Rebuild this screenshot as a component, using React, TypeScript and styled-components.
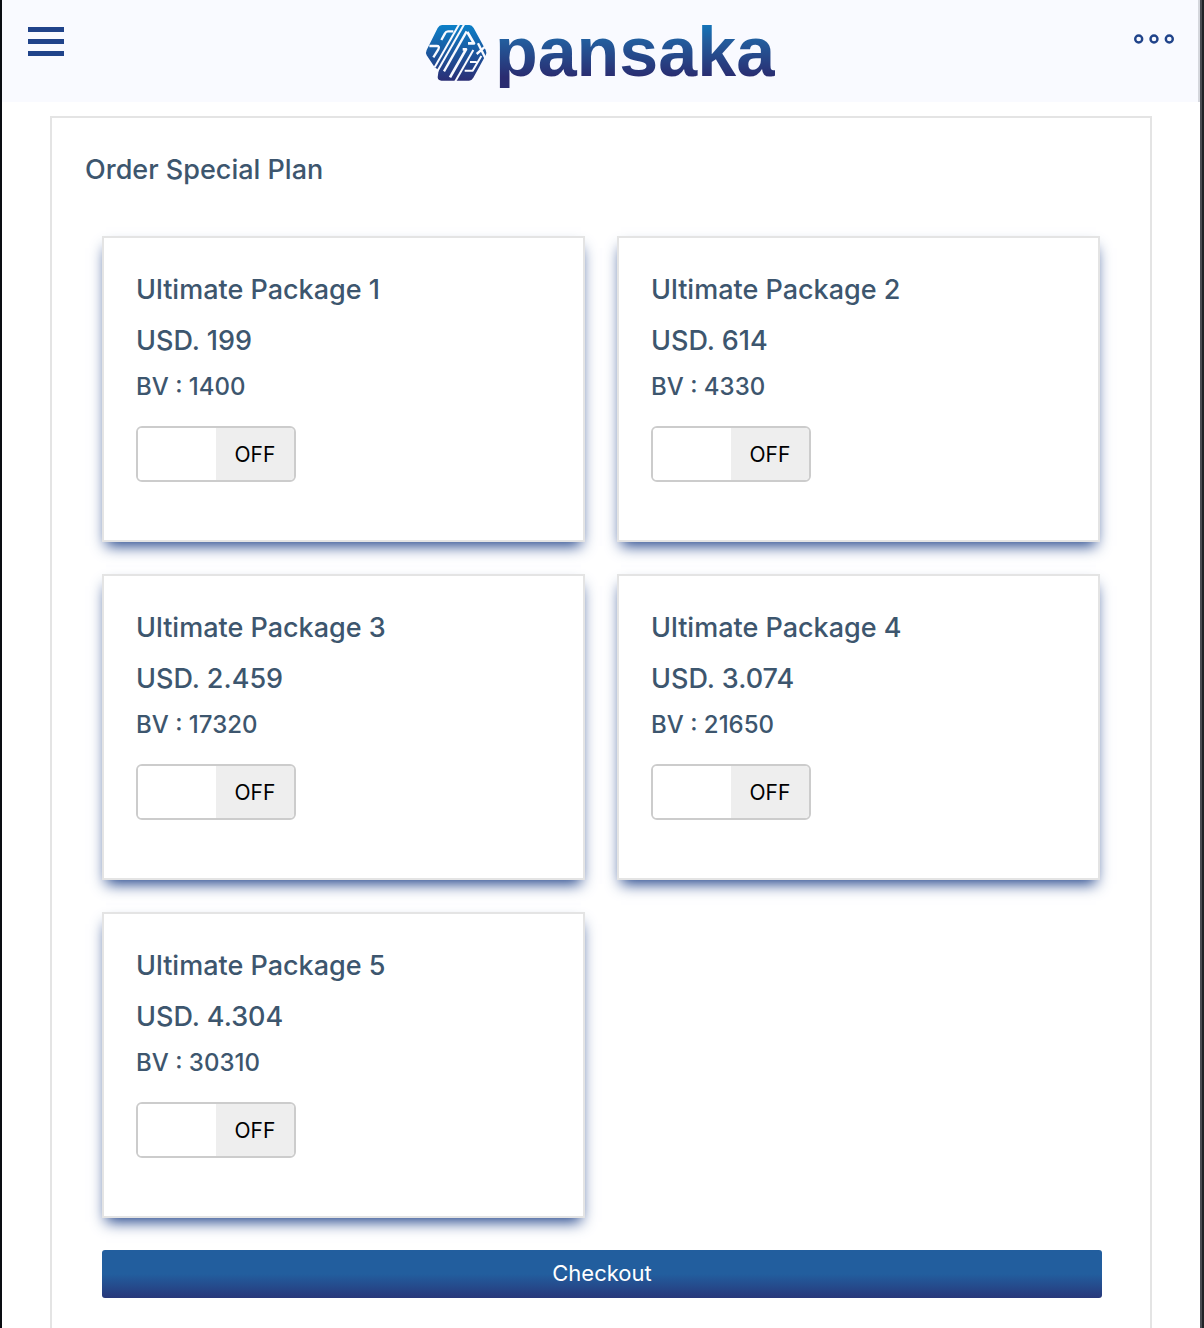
import React, { useState } from 'react';
import styled, { createGlobalStyle } from 'styled-components';

const ink = '#3d566e';
const navy = '#20438a';
const line = '#e4e4e4';

const GlobalStyle = createGlobalStyle`
  *, *::before, *::after { box-sizing: border-box; }
  body {
    margin: 0;
    background: #fff;
    color: ${ink};
    font-family: Inter, 'Open Sans', sans-serif;
  }
  h1, h2, p { margin: 0; font-weight: 500; }
`;

const Frame = styled.div`
  min-height: 100vh;
  display: flex;
  flex-direction: column;
  border-left: 2px solid #0a0d12;
  border-right: 2px solid #202327;
`;

const Screen = styled.div`
  flex: 1;
  display: flex;
  flex-direction: column;
  border-right: 2px solid #4a4d53;
`;

const Header = styled.header`
  display: grid;
  grid-template-columns: 1fr auto 1fr;
  align-items: start;
  height: 102px;
  padding: 16px 24px;
  background: #f9faff;
  border-right: 2px solid #d5d7dd;
`;

const IconButton = styled.button<{ $end?: boolean }>`
  display: flex;
  justify-self: ${p => (p.$end ? 'end' : 'start')};
  padding: ${p => (p.$end ? '18px 0' : '11px 2px')};
  border: 0;
  background: none;
  color: ${navy};
  cursor: pointer;
`;

const Brand = styled.a`
  display: flex;
  align-items: flex-start;
  gap: 8px;
  text-decoration: none;
`;

const Emblem = styled.svg`
  margin-top: 8px;
`;

const Wordmark = styled.span`
  font: bold 70px/72px 'Liberation Sans', Arial, sans-serif;
  background: linear-gradient(#0c80c8, #235c9c 35%, #2a2c70 85%);
  background-clip: text;
  -webkit-background-clip: text;
  color: transparent;
`;

const Panel = styled.main`
  flex: 1;
  margin: 14px 48px 0;
  padding: 32px 48px 30px 50px;
  border: 2px solid ${line};
  border-bottom: 0;
`;

const PageTitle = styled.h1`
  margin: 0 0 46px -17px;
  font-size: 27px;
  line-height: 40px;
`;

const Grid = styled.div`
  display: grid;
  grid-template-columns: 1fr 1fr;
  gap: 32px;
  padding-right: 2px;
`;

const Card = styled.section`
  min-height: 306px;
  padding: 32px;
  border: 2px solid ${line};
  background: #fff;
  box-shadow: 0 8px 14px -4px ${navy};
`;

const PackageName = styled.h2`
  font-size: 27px;
  line-height: 40px;
`;

const Price = styled.p`
  margin-top: 9px;
  font-size: 27px;
  line-height: 44px;
`;

const Volume = styled.p`
  margin-top: 4px;
  font-size: 24px;
  line-height: 40px;
`;

const Toggle = styled.label`
  position: relative;
  display: flex;
  width: 160px;
  height: 56px;
  margin-top: 19px;
  border: 2px solid #ccc;
  border-radius: 6px;
  overflow: hidden;
  cursor: pointer;
`;

const ToggleInput = styled.input`
  position: absolute;
  inset: 0;
  margin: 0;
  opacity: 0;
  cursor: pointer;
`;

const ToggleHalf = styled.span<{ $filled: boolean; $on?: boolean }>`
  flex: 1;
  background: ${p => (p.$filled ? (p.$on ? navy : '#eee') : '#fff')};
  color: ${p => (p.$on ? '#fff' : '#000')};
  font-size: 21px;
  line-height: 53px;
  text-align: center;
`;

const Checkout = styled.button`
  display: block;
  width: 100%;
  height: 48px;
  margin-top: 32px;
  padding: 0 0 2px;
  border: 0;
  border-radius: 3px;
  background: linear-gradient(#225e9e 50%, #28387a);
  color: #fff;
  font-family: inherit;
  font-size: 22px;
  cursor: pointer;
`;

const packages = [
  { name: 'Ultimate Package 1', price: '199', bv: 1400 },
  { name: 'Ultimate Package 2', price: '614', bv: 4330 },
  { name: 'Ultimate Package 3', price: '2.459', bv: 17320 },
  { name: 'Ultimate Package 4', price: '3.074', bv: 21650 },
  { name: 'Ultimate Package 5', price: '4.304', bv: 30310 },
];

function Switch({ name }: { name: string }) {
  const [on, setOn] = useState(false);
  return (
    <Toggle>
      <ToggleInput type="checkbox" aria-label={name} checked={on} onChange={() => setOn(!on)} />
      <ToggleHalf $filled={on} $on>{on ? 'ON' : ''}</ToggleHalf>
      <ToggleHalf $filled={!on}>{on ? '' : 'OFF'}</ToggleHalf>
    </Toggle>
  );
}

function BrandEmblem() {
  return (
    <Emblem width="62" height="58" viewBox="9 12 186 174" aria-hidden="true">
      <defs>
        <linearGradient id="emblem" x1="0" y1="14" x2="0" y2="184" gradientUnits="userSpaceOnUse">
          <stop offset="0" stopColor="#0c80c8" />
          <stop offset="1" stopColor="#2b2d74" />
        </linearGradient>
      </defs>
      <path
        fill="url(#emblem)"
        d="M60 15H142Q150 15 155 24L191 90Q195 98 191 106L154 173Q149 182 141 182H58Q48 182 47 172L50 150L38 142L14 106Q10 98 14 90L47 24Q52 15 60 15Z"
      />
      <g fill="none" stroke="#f9faff" strokeWidth="6" strokeLinejoin="round">
        <path d="M112 12L38 142" />
        <path d="M127 12L46 154" />
        <path d="M94 34H78Q72 34 69 40L58 60" strokeWidth="7" />
        <path d="M22 78H44Q54 78 49 88L34 112" strokeWidth="7" />
        <path d="M134 34L66 154" strokeWidth="7" />
        <path d="M136 36L156 70L138 70" strokeWidth="8" />
        <path d="M122 88H132L84 172" strokeWidth="8" />
        <path d="M154 90L100 184" />
        <path d="M164 102L194 76M168 70L194 122" strokeWidth="7" />
        <path d="M178 108L152 152H128M164 126H144" />
      </g>
    </Emblem>
  );
}

export default function App() {
  return (
    <>
      <GlobalStyle />
      <Frame>
        <Screen>
          <Header>
            <IconButton type="button" aria-label="Menu">
              <svg width="36" height="29" viewBox="0 0 36 29" fill="currentColor">
                <rect width="36" height="5" />
                <rect y="12" width="36" height="5" />
                <rect y="24" width="36" height="5" />
              </svg>
            </IconButton>
            <Brand href="#">
              <BrandEmblem />
              <Wordmark>pansaka</Wordmark>
            </Brand>
            <IconButton type="button" aria-label="More" $end>
              <svg width="40" height="10" viewBox="0 0 40 10" fill="none" stroke="currentColor" strokeWidth="2.4">
                <circle cx="4.7" cy="5" r="3.5" />
                <circle cx="20" cy="5" r="3.5" />
                <circle cx="35.3" cy="5" r="3.5" />
              </svg>
            </IconButton>
          </Header>
          <Panel>
            <PageTitle>Order Special Plan</PageTitle>
            <Grid>
              {packages.map(item => (
                <Card key={item.name}>
                  <PackageName>{item.name}</PackageName>
                  <Price>USD. {item.price}</Price>
                  <Volume>BV : {item.bv}</Volume>
                  <Switch name={item.name} />
                </Card>
              ))}
            </Grid>
            <Checkout type="button">Checkout</Checkout>
          </Panel>
        </Screen>
      </Frame>
    </>
  );
}
